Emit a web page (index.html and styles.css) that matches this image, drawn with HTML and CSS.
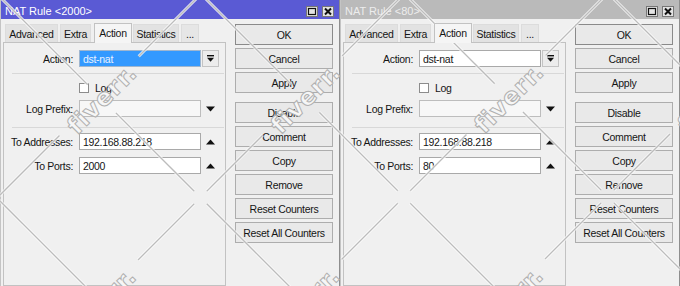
FILE: index.html
```html
<!DOCTYPE html>
<html>
<head>
<meta charset="utf-8">
<link rel="stylesheet" href="styles.css">
</head>
<body>
<div class="screen">
  <div class="win active">
    <div class="titlebar">
      <span class="title">NAT Rule &lt;2000&gt;</span>
      <span class="ctrls">
        <svg class="ctl" width="12" height="11" viewBox="0 0 12 11"><rect x="0.5" y="0.5" width="11" height="10" fill="#e4e4e4" stroke="#777"/><rect x="2.5" y="2.5" width="7" height="6" fill="none" stroke="#111" stroke-width="1.2"/></svg>
        <svg class="ctl" width="12" height="11" viewBox="0 0 12 11"><rect x="0.5" y="0.5" width="11" height="10" fill="#e4e4e4" stroke="#777"/><path d="M3 2.5 L9 8.5 M9 2.5 L3 8.5" stroke="#111" stroke-width="2"/></svg>
      </span>
    </div>
    <div class="body">
      <div class="left">
        <div class="tabs">
          <div class="tab t-adv">Advanced</div>
          <div class="tab t-extra">Extra</div>
          <div class="tab t-action active">Action</div>
          <div class="tab t-stats">Statistics</div>
          <div class="tab t-dots">...</div>
        </div>
        <div class="panel">
          <div class="row">
            <div class="lbl">Action:</div>
            <div class="field selected">dst-nat</div>
            <div class="ddbtn"><svg width="9" height="9" viewBox="0 0 9 9"><rect x="1" y="1" width="7" height="1.4" fill="#111"/><path d="M1 3.8 H8 L4.5 7.8 Z" fill="#111"/></svg></div>
          </div>
          <div class="sep"></div>
          <div class="row logrow">
            <div class="check"></div>
            <div class="checklbl">Log</div>
          </div>
          <div class="row r-prefix">
            <div class="lbl">Log Prefix:</div>
            <div class="field pale"></div>
            <div class="tri"><svg width="9" height="6" viewBox="0 0 9 6"><path d="M0 0.5 H9 L4.5 5.5 Z" fill="#111"/></svg></div>
          </div>
          <div class="sep sep2"></div>
          <div class="row r-addr">
            <div class="lbl">To Addresses:</div>
            <div class="field">192.168.88.218</div>
            <div class="tri"><svg width="9" height="6" viewBox="0 0 9 6"><path d="M0 5.5 H9 L4.5 0.5 Z" fill="#111"/></svg></div>
          </div>
          <div class="row r-ports">
            <div class="lbl">To Ports:</div>
            <div class="field">2000</div>
            <div class="tri"><svg width="9" height="6" viewBox="0 0 9 6"><path d="M0 5.5 H9 L4.5 0.5 Z" fill="#111"/></svg></div>
          </div>
        </div>
      </div>
      <div class="buttons">
        <div class="btn default">OK</div>
        <div class="btn">Cancel</div>
        <div class="btn">Apply</div>
        <div class="btn gap">Disable</div>
        <div class="btn">Comment</div>
        <div class="btn">Copy</div>
        <div class="btn">Remove</div>
        <div class="btn">Reset Counters</div>
        <div class="btn">Reset All Counters</div>
      </div>
    </div>
  </div>

  <div class="win inactive">
    <div class="titlebar">
      <span class="title">NAT Rule &lt;80&gt;</span>
      <span class="ctrls">
        <svg class="ctl" width="12" height="11" viewBox="0 0 12 11"><rect x="0.5" y="0.5" width="11" height="10" fill="#e4e4e4" stroke="#777"/><rect x="2.5" y="2.5" width="7" height="6" fill="none" stroke="#111" stroke-width="1.2"/></svg>
        <svg class="ctl" width="12" height="11" viewBox="0 0 12 11"><rect x="0.5" y="0.5" width="11" height="10" fill="#e4e4e4" stroke="#777"/><path d="M3 2.5 L9 8.5 M9 2.5 L3 8.5" stroke="#111" stroke-width="2"/></svg>
      </span>
    </div>
    <div class="body">
      <div class="left">
        <div class="tabs">
          <div class="tab t-adv">Advanced</div>
          <div class="tab t-extra">Extra</div>
          <div class="tab t-action active">Action</div>
          <div class="tab t-stats">Statistics</div>
          <div class="tab t-dots">...</div>
        </div>
        <div class="panel">
          <div class="row">
            <div class="lbl">Action:</div>
            <div class="field">dst-nat</div>
            <div class="ddbtn"><svg width="9" height="9" viewBox="0 0 9 9"><rect x="1" y="1" width="7" height="1.4" fill="#111"/><path d="M1 3.8 H8 L4.5 7.8 Z" fill="#111"/></svg></div>
          </div>
          <div class="sep"></div>
          <div class="row logrow">
            <div class="check"></div>
            <div class="checklbl">Log</div>
          </div>
          <div class="row r-prefix">
            <div class="lbl">Log Prefix:</div>
            <div class="field pale"></div>
            <div class="tri"><svg width="9" height="6" viewBox="0 0 9 6"><path d="M0 0.5 H9 L4.5 5.5 Z" fill="#111"/></svg></div>
          </div>
          <div class="sep sep2"></div>
          <div class="row r-addr">
            <div class="lbl">To Addresses:</div>
            <div class="field">192.168.88.218</div>
            <div class="tri"><svg width="9" height="6" viewBox="0 0 9 6"><path d="M0 5.5 H9 L4.5 0.5 Z" fill="#111"/></svg></div>
          </div>
          <div class="row r-ports">
            <div class="lbl">To Ports:</div>
            <div class="field">80</div>
            <div class="tri"><svg width="9" height="6" viewBox="0 0 9 6"><path d="M0 5.5 H9 L4.5 0.5 Z" fill="#111"/></svg></div>
          </div>
        </div>
      </div>
      <div class="buttons">
        <div class="btn default">OK</div>
        <div class="btn">Cancel</div>
        <div class="btn">Apply</div>
        <div class="btn gap">Disable</div>
        <div class="btn">Comment</div>
        <div class="btn">Copy</div>
        <div class="btn">Remove</div>
        <div class="btn">Reset Counters</div>
        <div class="btn">Reset All Counters</div>
      </div>
    </div>
  </div>

  <svg class="watermark" width="680" height="286" viewBox="0 0 680 286">
    <defs>
      <mask id="wm" maskUnits="userSpaceOnUse" x="0" y="0" width="680" height="286">
        <rect x="0" y="0" width="680" height="286" fill="#fff"/>
        <g fill="#000">
          <rect x="-56" y="-16" width="112" height="40" transform="translate(99,96) rotate(-45)"/>
          <rect x="-56" y="-16" width="112" height="40" transform="translate(302,299) rotate(-45)"/>
          <rect x="-56" y="-16" width="112" height="40" transform="translate(302.5,95.5) rotate(-45)"/>
          <rect x="-56" y="-16" width="112" height="40" transform="translate(505.5,298.5) rotate(-45)"/>
          <rect x="-56" y="-16" width="112" height="40" transform="translate(98.5,299.5) rotate(-45)"/>
          <rect x="-56" y="-16" width="112" height="40" transform="translate(506,95) rotate(-45)"/>
          <rect x="-56" y="-16" width="112" height="40" transform="translate(709.5,94.5) rotate(-45)"/>
          <circle cx="200.5" cy="197.5" r="9"/>
          <circle cx="404" cy="197" r="9"/>
          <circle cx="607.5" cy="196.5" r="9"/>
        </g>
      </mask>
    </defs>
    <g mask="url(#wm)">
      <g class="wm-under">
        <line x1="-211" y1="-10" x2="99" y2="300"/>
        <line x1="-7" y1="-10" x2="303" y2="300"/>
        <line x1="197" y1="-10" x2="507" y2="300"/>
        <line x1="401" y1="-10" x2="711" y2="300"/>
        <line x1="605" y1="-10" x2="915" y2="300"/>
        <line x1="205" y1="-10" x2="-105" y2="300"/>
        <line x1="408" y1="-10" x2="98" y2="300"/>
        <line x1="611" y1="-10" x2="301" y2="300"/>
        <line x1="814" y1="-10" x2="504" y2="300"/>
      </g>
      <g class="wm-line">
        <line x1="-211" y1="-10" x2="99" y2="300"/>
        <line x1="-7" y1="-10" x2="303" y2="300"/>
        <line x1="197" y1="-10" x2="507" y2="300"/>
        <line x1="401" y1="-10" x2="711" y2="300"/>
        <line x1="605" y1="-10" x2="915" y2="300"/>
        <line x1="205" y1="-10" x2="-105" y2="300"/>
        <line x1="408" y1="-10" x2="98" y2="300"/>
        <line x1="611" y1="-10" x2="301" y2="300"/>
        <line x1="814" y1="-10" x2="504" y2="300"/>
      </g>
    </g>
    <g class="wm-text">
      <text transform="translate(103,100) rotate(-45)">fiverr.</text>
      <text transform="translate(306,303) rotate(-45)">fiverr.</text>
      <text transform="translate(306.5,99.5) rotate(-45)">fiverr.</text>
      <text transform="translate(509.5,302.5) rotate(-45)">fiverr.</text>
      <text transform="translate(102.5,303.5) rotate(-45)">fiverr.</text>
      <text transform="translate(510,99) rotate(-45)">fiverr.</text>
      <text transform="translate(713.5,98.5) rotate(-45)">fiverr.</text>
    </g>
  </svg>
</div>
</body>
</html>
```

FILE: styles.css
```css
* { box-sizing: border-box; }

body {
  margin: 0;
  width: 680px;
  height: 286px;
  overflow: hidden;
  background: #f0f0f0;
  font-family: "Liberation Sans", Arial, sans-serif;
  font-size: 10.5px;
  letter-spacing: -0.3px;
  color: #151515;
}

.screen {
  position: relative;
  display: flex;
  width: 680px;
  height: 286px;
  overflow: hidden;
}

.win {
  width: 340px;
  height: 286px;
  display: flex;
  flex-direction: column;
  background: #f0f0f0;
  border-left: 1px solid #c4c4c4;
  border-right: 1px solid #8e8e8e;
}

.titlebar {
  height: 19px;
  flex: none;
  display: flex;
  align-items: center;
  justify-content: space-between;
  padding: 2px 5px 0 4px;
  background: #5a5ad4;
  color: #ffffff;
  font-size: 11px;
  letter-spacing: 0;
}

.win.inactive .titlebar {
  background: #bababa;
  color: #ededed;
}

.ctrls {
  display: flex;
  gap: 4px;
  padding-top: 1px;
}

.ctl { display: block; }

.body {
  flex: 1;
  display: flex;
  padding: 4px 0 0 2px;
  min-height: 0;
}

.left {
  width: 223px;
  display: flex;
  flex-direction: column;
}

.tabs {
  display: flex;
  align-items: flex-end;
  height: 19px;
  padding-left: 2px;
}

.tab {
  height: 18px;
  display: flex;
  align-items: center;
  justify-content: center;
  background: #e2e2e2;
  border: 1px solid #dcdcdc;
  border-bottom: none;
  margin-right: 2px;
}

.tab.active {
  position: relative;
  z-index: 1;
  height: 20px;
  margin-bottom: -1px;
  background: #f5f5f5;
  border-color: #c2c2c2;
  padding-bottom: 2px;
}

.t-adv { width: 53px; }
.t-extra { width: 31px; margin-right: 3px; }
.t-action { width: 38px; margin-right: 1px; }
.t-stats { width: 46px; }
.t-dots { width: 18px; background: #e6e6e6; }

.panel {
  flex: 1;
  border: 1px solid #c2c2c2;
  padding-top: 7px;
  background: #f0f0f0;
}

.row {
  display: flex;
  align-items: center;
  height: 17px;
}

.lbl {
  width: 69px;
  text-align: right;
  white-space: nowrap;
}

.field {
  margin-left: 6px;
  width: 122px;
  height: 17px;
  border: 1px solid #a9a9a9;
  background: #ffffff;
  padding-left: 3px;
  display: flex;
  align-items: center;
  white-space: nowrap;
}

.field.selected {
  background: #3399ff;
  color: #e8f2ff;
  border-color: #9fb6cf;
}

.field.pale {
  background: #f7f7f7;
  border-color: #bdbdbd;
}

.ddbtn {
  margin-left: 1px;
  width: 17px;
  height: 17px;
  border: 1px solid #c4c4c4;
  background: #ececec;
  display: flex;
  align-items: center;
  justify-content: center;
}

.tri {
  margin-left: 1px;
  width: 17px;
  display: flex;
  justify-content: center;
}

.tri svg, .ddbtn svg { display: block; }

.sep {
  height: 1px;
  background: #d8d8d8;
  margin: 6px 1px 0 8px;
}

.sep2 { margin-top: 10px; }

.logrow {
  margin-top: 7px;
  height: 13px;
}

.check {
  width: 10px;
  height: 10px;
  margin-left: 75px;
  border: 1px solid #8c8c8c;
  background: #ffffff;
}

.checklbl { margin-left: 6px; }

.r-prefix { margin-top: 6px; }
.r-addr { margin-top: 5px; }
.r-ports { margin-top: 7px; }

.buttons {
  width: 98px;
  margin-left: 9px;
  padding-top: 1px;
  display: flex;
  flex-direction: column;
  gap: 3px;
}

.btn {
  height: 21px;
  border: 1px solid #adadad;
  background: #e9e9e9;
  display: flex;
  align-items: center;
  justify-content: center;
  white-space: nowrap;
}

.btn.default { border-color: #8a8a8a; }

.btn.gap { margin-top: 6px; }

.watermark {
  position: absolute;
  left: 0;
  top: 0;
  pointer-events: none;
}

.wm-under line {
  stroke: #ffffff;
  stroke-width: 3;
  opacity: 0.8;
}

.wm-line line {
  stroke: #bcbcbc;
  stroke-width: 1.3;
}

.wm-text text {
  font-family: "DejaVu Sans", sans-serif;
  font-weight: bold;
  font-size: 24px;
  letter-spacing: 1px;
  text-anchor: middle;
  dominant-baseline: middle;
  fill: #f6f6f6;
  stroke: #b0b0b0;
  stroke-width: 1;
}
```
